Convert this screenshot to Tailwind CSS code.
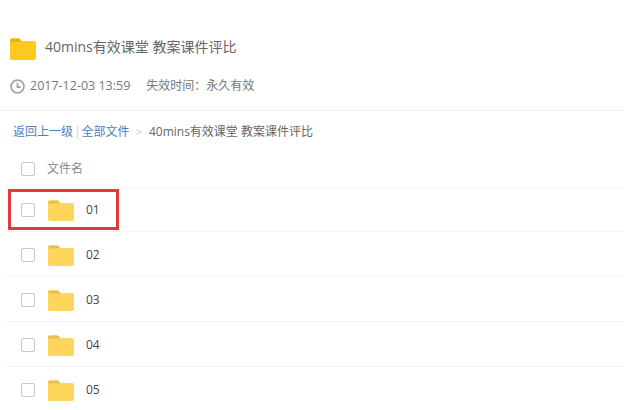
<!DOCTYPE html>
<html lang="zh">
<head>
<meta charset="utf-8">
<script src="https://cdn.jsdelivr.net/npm/@tailwindcss/browser@4"></script>
</head>
<body class="bg-white overflow-hidden font-['Open_Sans','Noto_Sans_CJK_SC',sans-serif]">
<div class="relative w-[624px] h-[410px] overflow-hidden">
  <!-- header -->
  <div class="h-[111px] border-b border-[#f2f2f2] pl-[10px]">
    <div class="flex items-center pt-[37px] h-[61px]">
      <svg class="w-[26px] h-[22px]" viewBox="0 0 26 22"><path d="M0 2a2 2 0 0 1 2-2h6.500a2 2 0 0 1 1.600.8L11.500 3H24a2 2 0 0 1 2 2v15a2 2 0 0 1-2 2H2a2 2 0 0 1-2-2z" fill="#fdc91f"/><path d="M0 4h11.500L10 1H1z" fill="#e8b41a"/></svg>
      <span class="ml-[9px] mb-[4px] text-[14px] text-[#666] leading-[20px]">40mins有效课堂 教案课件评比</span>
    </div>
    <div class="flex items-center mt-[15px] text-[12px] text-[#777] leading-[20px]">
      <svg class="w-[15px] h-[15px]" viewBox="0 0 15 15" fill="none" stroke="#a3a3a3" stroke-width="1.800"><circle cx="7.500" cy="7.500" r="6.400"/><path d="M7.500 3.800v4.200h3.200"/></svg>
      <span class="ml-[5px] text-[12.500px]">2017-12-03 13:59</span>
      <span class="ml-[16px]">失效时间：永久有效</span>
    </div>
  </div>
  <!-- breadcrumb -->
  <div class="flex items-center h-[40px] pl-[13px] pt-[2px] text-[12px] leading-[20px]">
    <span class="text-[#4a7fc4]">返回上一级</span>
    <span class="mx-[1px] text-[#c5d4e8]">|</span>
    <span class="text-[#4a7fc4]">全部文件</span>
    <span class="ml-[6px] mr-[7px] text-[#c8c8c8] text-[11px]">&gt;</span>
    <span class="text-[#666]">40mins有效课堂 教案课件评比</span>
  </div>
  <!-- list head -->
  <div class="flex items-center h-[37px] ml-[5px] pl-[16px] border-b border-[#f5f5f5]">
    <span class="w-[14px] h-[14px] rounded-[2px] border border-[#c9c9d0]"></span>
    <span class="ml-[12px] text-[12px] text-[#888]">文件名</span>
  </div>
  <!-- rows -->
  <div class="ml-[5px] -mt-px">
    <div class="flex items-center h-[45px] pt-[2px] pl-[16px] border-b border-[#f5f5f5]">
      <span class="w-[14px] h-[14px] rounded-[2px] border border-[#c9c9d0]"></span>
      <svg class="ml-[13px] w-[26px] h-[21px]" viewBox="0 0 26 21"><path d="M0 2a2 2 0 0 1 2-2h7a2 2 0 0 1 1.600.8L12 3h12a2 2 0 0 1 2 2v14a2 2 0 0 1-2 2H2a2 2 0 0 1-2-2z" fill="#fed65c"/><path d="M0 3.500h12.300L10.500 1H1z" fill="#e8bd4f"/></svg>
      <span class="ml-[12px] text-[12px] text-[#445]">01</span>
    </div>
    <div class="flex items-center h-[45px] pt-[2px] pl-[16px] border-b border-[#f5f5f5]">
      <span class="w-[14px] h-[14px] rounded-[2px] border border-[#c9c9d0]"></span>
      <svg class="ml-[13px] w-[26px] h-[21px]" viewBox="0 0 26 21"><path d="M0 2a2 2 0 0 1 2-2h7a2 2 0 0 1 1.600.8L12 3h12a2 2 0 0 1 2 2v14a2 2 0 0 1-2 2H2a2 2 0 0 1-2-2z" fill="#fed65c"/><path d="M0 3.500h12.300L10.500 1H1z" fill="#e8bd4f"/></svg>
      <span class="ml-[12px] text-[12px] text-[#445]">02</span>
    </div>
    <div class="flex items-center h-[45px] pt-[2px] pl-[16px] border-b border-[#f5f5f5]">
      <span class="w-[14px] h-[14px] rounded-[2px] border border-[#c9c9d0]"></span>
      <svg class="ml-[13px] w-[26px] h-[21px]" viewBox="0 0 26 21"><path d="M0 2a2 2 0 0 1 2-2h7a2 2 0 0 1 1.600.8L12 3h12a2 2 0 0 1 2 2v14a2 2 0 0 1-2 2H2a2 2 0 0 1-2-2z" fill="#fed65c"/><path d="M0 3.500h12.300L10.500 1H1z" fill="#e8bd4f"/></svg>
      <span class="ml-[12px] text-[12px] text-[#445]">03</span>
    </div>
    <div class="flex items-center h-[45px] pt-[2px] pl-[16px] border-b border-[#f5f5f5]">
      <span class="w-[14px] h-[14px] rounded-[2px] border border-[#c9c9d0]"></span>
      <svg class="ml-[13px] w-[26px] h-[21px]" viewBox="0 0 26 21"><path d="M0 2a2 2 0 0 1 2-2h7a2 2 0 0 1 1.600.8L12 3h12a2 2 0 0 1 2 2v14a2 2 0 0 1-2 2H2a2 2 0 0 1-2-2z" fill="#fed65c"/><path d="M0 3.500h12.300L10.500 1H1z" fill="#e8bd4f"/></svg>
      <span class="ml-[12px] text-[12px] text-[#445]">04</span>
    </div>
    <div class="flex items-center h-[45px] pt-[2px] pl-[16px] border-b border-[#f5f5f5]">
      <span class="w-[14px] h-[14px] rounded-[2px] border border-[#c9c9d0]"></span>
      <svg class="ml-[13px] w-[26px] h-[21px]" viewBox="0 0 26 21"><path d="M0 2a2 2 0 0 1 2-2h7a2 2 0 0 1 1.600.8L12 3h12a2 2 0 0 1 2 2v14a2 2 0 0 1-2 2H2a2 2 0 0 1-2-2z" fill="#fed65c"/><path d="M0 3.500h12.300L10.500 1H1z" fill="#e8bd4f"/></svg>
      <span class="ml-[12px] text-[12px] text-[#445]">05</span>
    </div>
  </div>
  <!-- red annotation box -->
  <div class="absolute left-[8px] top-[189px] w-[111px] h-[41px] border-[3px] border-[#e23b3f]"></div>
</div>
</body>
</html>
